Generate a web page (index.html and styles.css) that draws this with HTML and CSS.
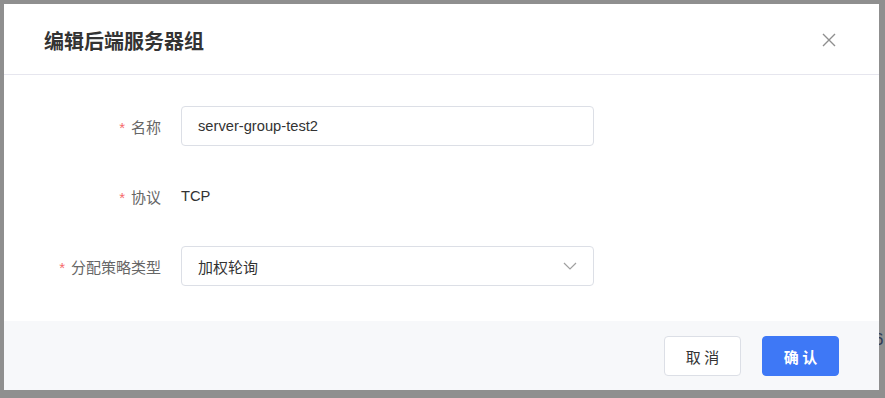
FILE: index.html
```html
<!DOCTYPE html>
<html lang="zh">
<head>
<meta charset="utf-8">
<link rel="stylesheet" href="styles.css">
</head>
<body>
<div class="peek">6</div>
<div class="dialog">
  <div class="header">
    <h2 class="title">编辑后端服务器组</h2>
    <span class="close">
      <svg width="14" height="14" viewBox="0 0 14 14"><path d="M1 1 L13 13 M13 1 L1 13" stroke="#8f8f8f" stroke-width="1.4" fill="none"/></svg>
    </span>
  </div>
  <div class="body">
    <div class="row">
      <label class="label"><span class="req">*</span>名称</label>
      <div class="input">server-group-test2</div>
    </div>
    <div class="row">
      <label class="label"><span class="req">*</span>协议</label>
      <div class="value">TCP</div>
    </div>
    <div class="row">
      <label class="label"><span class="req">*</span>分配策略类型</label>
      <div class="input select">
        <span>加权轮询</span>
        <svg class="chev" width="14" height="8" viewBox="0 0 14 8"><path d="M1 1 L7 7 L13 1" stroke="#a0a0a0" stroke-width="1.2" fill="none"/></svg>
      </div>
    </div>
  </div>
  <div class="footer">
    <button class="btn">取 消</button>
    <button class="btn primary">确 认</button>
  </div>
</div>
</body>
</html>
```

FILE: styles.css
```css
html, body {
  margin: 0;
  padding: 0;
}
body {
  background: #8f8f8f;
  width: 885px;
  height: 398px;
  padding: 4px 6px 8px 4px;
  box-sizing: border-box;
  font-family: "Liberation Sans", "Noto Sans CJK SC", sans-serif;
  font-size: 14px;
  position: relative;
  overflow: hidden;
}
.peek {
  position: absolute;
  left: 874px;
  top: 330px;
  font-size: 17px;
  color: #2f3d57;
}
.dialog {
  position: relative;
  width: 875px;
  height: 386px;
  background: #fff;
  display: flex;
  flex-direction: column;
}
.header {
  height: 70px;
  border-bottom: 1px solid #e6e6ee;
  display: flex;
  align-items: center;
  justify-content: space-between;
  padding: 0 43px 0 40px;
  box-sizing: content-box;
}
.title {
  margin: 0;
  font-size: 20px;
  font-weight: bold;
  color: #333;
  font-family: "Noto Sans CJK SC", sans-serif;
  padding-top: 2px;
}
.close {
  display: flex;
  width: 14px;
  height: 14px;
  margin-top: 2px;
}
.body {
  flex: 1;
  padding-top: 31px;
  display: flex;
  flex-direction: column;
  gap: 30px;
}
.row {
  display: flex;
  align-items: center;
  height: 40px;
}
.label {
  width: 177px;
  padding-right: 20px;
  box-sizing: border-box;
  text-align: right;
  color: #666;
  font-family: "Noto Sans CJK SC", sans-serif;
  font-size: 15px;
  flex-shrink: 0;
}
.req {
  color: #f56c6c;
  margin-right: 6px;
  font-family: "Liberation Sans", sans-serif;
}
.input {
  width: 413px;
  height: 40px;
  box-sizing: border-box;
  border: 1px solid #dcdfe6;
  border-radius: 4px;
  padding: 0 16px;
  display: flex;
  align-items: center;
  color: #333;
  font-size: 14.7px;
}
.select {
  justify-content: space-between;
  font-family: "Noto Sans CJK SC", sans-serif;
  font-size: 15px;
}
.value {
  color: #333;
  font-size: 14.7px;
}
.footer {
  height: 69px;
  background: #f7f8fa;
  display: flex;
  justify-content: flex-end;
  align-items: flex-start;
  padding: 15px 40px 0 0;
  box-sizing: border-box;
  gap: 21px;
}
.btn {
  width: 77px;
  height: 40px;
  border: 1px solid #dcdfe6;
  border-radius: 4px;
  background: #fff;
  color: #333;
  font-family: "Noto Sans CJK SC", sans-serif;
  font-size: 15px;
  padding: 0;
}
.btn.primary {
  background: #3e78f6;
  border-color: #3e78f6;
  color: #fff;
  font-weight: bold;
}
```
